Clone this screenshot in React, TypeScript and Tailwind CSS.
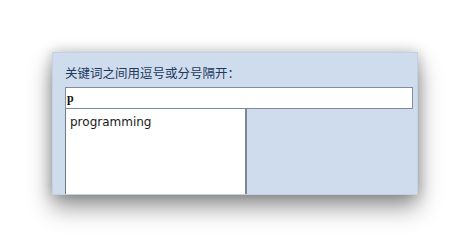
import React from "react";

export default function App() {
  return (
    <div className="w-[470px] h-[247px] bg-white overflow-hidden pt-[52px] pl-[52px]">
      <div className="w-[366px] h-[143px] bg-[#cfdcee] border border-[#c4d1e3] overflow-hidden pl-[12px] pt-[12px] shadow-[0_12px_22px_rgba(0,0,0,0.42),0_0_12px_rgba(0,0,0,0.22)]">
        <div
          className="h-[22px] text-[12.5px] leading-[15px] text-[#1e3a5c]"
          style={{ fontFamily: '"Noto Sans CJK SC", sans-serif' }}
        >
          关键词之间用逗号或分号隔开：
        </div>
        <div className="w-[348px] h-[22px] bg-white border border-[#7f8c9c] flex items-center pl-[1px]">
          <span
            className="text-[12px] font-bold text-[#111] leading-none"
            style={{ fontFamily: '"Liberation Serif", serif' }}
          >
            p
          </span>
        </div>
        <div className="w-[182px] h-[120px] bg-white border-l border-l-[#6d7888] border-r-2 border-r-[#7c8794] pl-[4px] pt-[6px]">
          <div
            className="text-[12px] leading-[14px] text-[#1a1a1a]"
            style={{ fontFamily: '"DejaVu Sans", sans-serif' }}
          >
            programming
          </div>
        </div>
      </div>
    </div>
  );
}
